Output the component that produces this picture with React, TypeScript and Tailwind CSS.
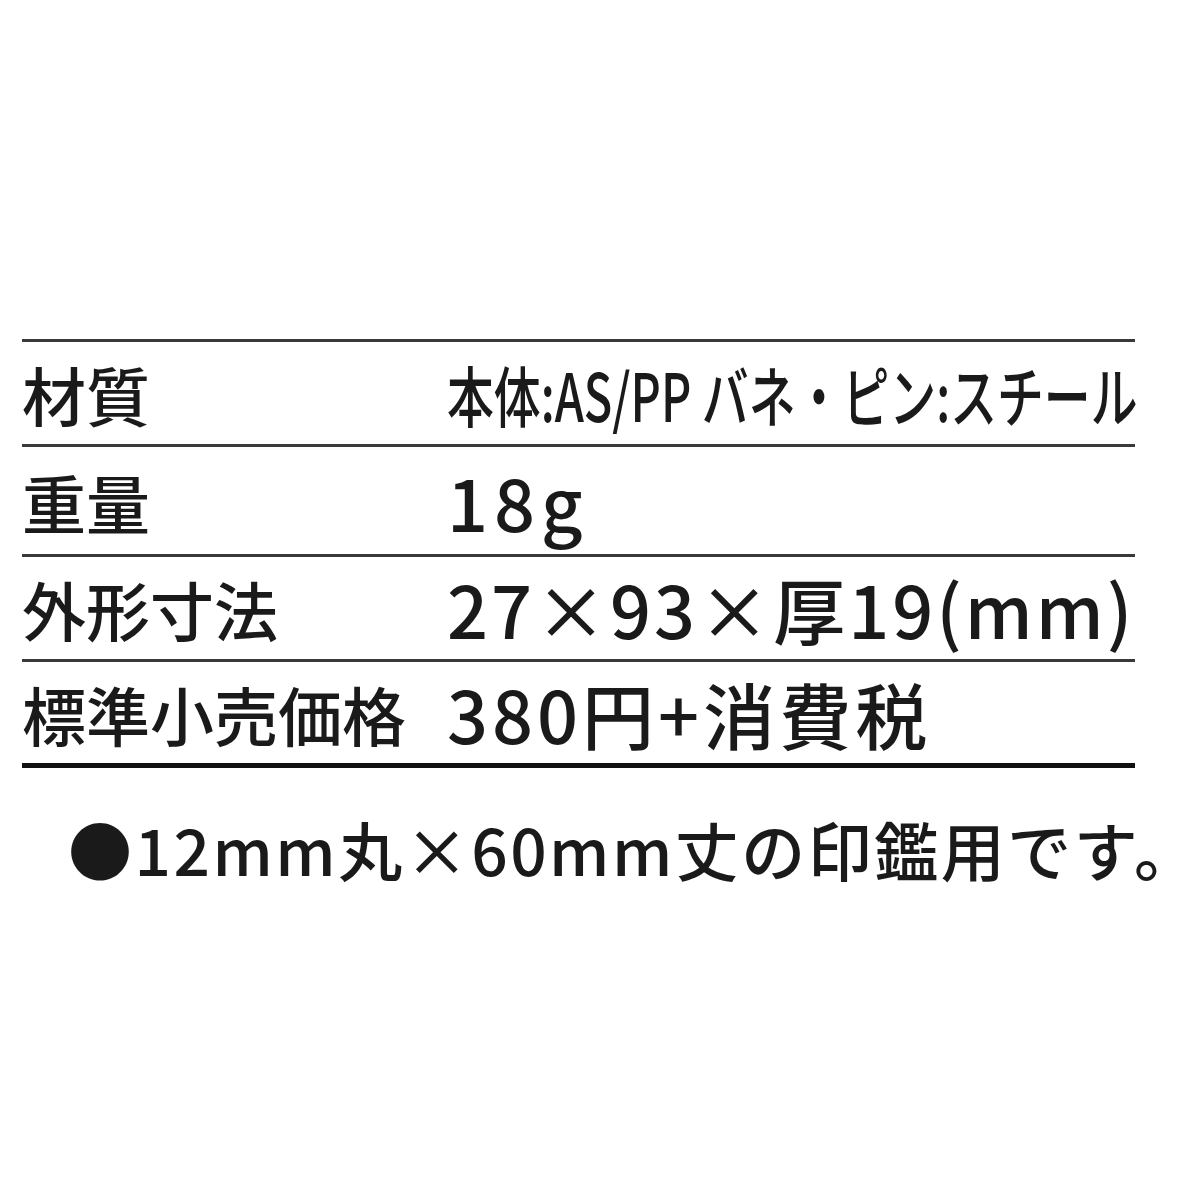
import React from "react";

const F = { fontFamily: '"Noto Sans CJK JP", "Noto Sans", sans-serif' };

export default function App() {
  return (
    <div className="w-[1200px] h-[1200px] bg-white text-[#1a1a1a]" style={F}>
      <div className="pt-[339px] pl-[22px]">
        <div className="w-[1113px] border-t-[3px] border-[#3a3a3a]">
          <div className="h-[105px] flex items-center border-b-[3px] border-[#3a3a3a]">
            <div className="w-[425px] shrink-0 text-[64px] leading-none font-medium">材質</div>
            <div className="text-[66px] leading-none font-medium whitespace-nowrap origin-left scale-x-[0.71]">
              本体:AS/PP バネ・ピン:スチール
            </div>
          </div>
          <div className="h-[110px] flex items-center border-b-[3px] border-[#3a3a3a]">
            <div className="w-[425px] shrink-0 text-[64px] leading-none font-medium">重量</div>
            <div className="text-[72px] leading-none font-medium tracking-[6px]">18g</div>
          </div>
          <div className="h-[105px] flex items-center border-b-[3px] border-[#3a3a3a]">
            <div className="w-[425px] shrink-0 text-[64px] leading-none font-medium">外形寸法</div>
            <div className="text-[72px] leading-none font-medium tracking-[3px] whitespace-nowrap">27×93×厚19(mm)</div>
          </div>
          <div className="h-[106px] flex items-center border-b-[5px] border-[#111]">
            <div className="w-[425px] shrink-0 text-[64px] leading-none font-medium">標準小売価格</div>
            <div className="text-[72px] leading-none font-medium tracking-[4px] whitespace-nowrap">380円+消費税</div>
          </div>
        </div>
        <div className="pl-[46px] pt-[45px] pr-[8px] text-[64px] leading-[1.1] font-medium tracking-[2.5px] whitespace-nowrap">
          ●12mm丸×60mm丈の印鑑用です。
        </div>
      </div>
    </div>
  );
}
